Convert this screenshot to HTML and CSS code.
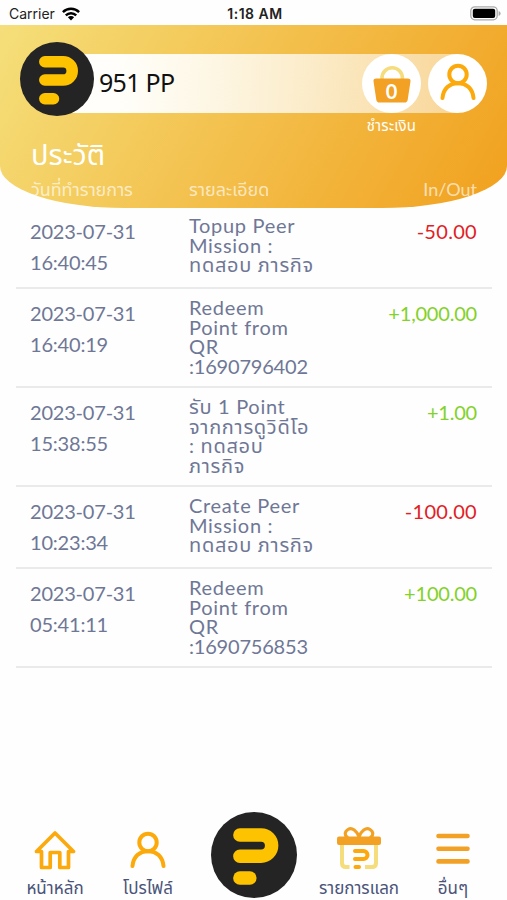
FILE: index.html
```html
<!DOCTYPE html>
<html lang="th">
<head>
  <meta charset="UTF-8">
  <title>ประวัติ</title>
  <link rel="stylesheet" href="styles.css">
</head>
<body>
  <svg class="defs" width="0" height="0">
    <symbol id="logo" viewBox="0 0 73 73">
      <circle cx="36.5" cy="36.5" r="36.5" fill="#242424"/>
      <g fill="none" stroke="#fdc300" stroke-linecap="round">
        <path stroke-width="11.4" d="M24.5 19.5H42.5a9 9 0 0 1 0 18H24.5"/>
        <path stroke-width="11.4" d="M24.5 56H33"/>
      </g>
    </symbol>
    <symbol id="user" viewBox="0 0 38 40">
      <g fill="none" stroke="#fca90c" stroke-width="4.2" stroke-linecap="round">
        <circle cx="19" cy="12" r="9.2"/>
        <path d="M2.600 37C3.600 27 10 21.200 19 21.200S34.400 27 35.400 37"/>
      </g>
    </symbol>
  </svg>

  <div class="status">
    <div class="carrier">
      <span>Carrier</span>
      <svg width="18" height="14" viewBox="0 0 18 14">
        <g fill="none" stroke="#000" stroke-width="2.4">
          <path d="M.9 5.2a11.4 11.4 0 0 1 16.2 0"/>
          <path d="M3.8 8.4a7.3 7.3 0 0 1 10.4 0"/>
        </g>
        <path d="M9 13.4L5.9 10.3a4.4 4.4 0 0 1 6.2 0z"/>
      </svg>
    </div>
    <div class="time">1:18 AM</div>
    <svg class="battery" width="31" height="15" viewBox="0 0 31 15">
      <rect x=".8" y=".8" width="26.4" height="13" rx="4" fill="#fff" stroke="#aaa" stroke-width="1.3"/>
      <rect x="2.8" y="2.7" width="22.4" height="9.2" rx="2"/>
      <path d="M28.6 5v5q2-.8 2-2.5t-2-2.5z" fill="#aaa"/>
    </svg>
  </div>

  <header>
    <div class="balance">
      <svg class="balance-logo"><use href="#logo"/></svg>
      <div class="points">951 PP</div>
      <div class="round cart">
        <svg width="38" height="38" viewBox="0 0 38 38">
          <path d="M9 14v-1a10.2 10.2 0 0 1 20.4 0v1" fill="none" stroke="#f5dc7c" stroke-width="3.6"/>
          <path d="M3.2 13.6h31.6q3 0 2.7 2.7l-2.8 18.5q-.4 2.8-3.2 2.8h-25q-2.8 0-3.2-2.8L.5 16.3q-.3-2.700 2.700-2.700z" fill="#f2a124"/>
        </svg>
        <b>0</b>
        <span class="cart-label">ชำระเงิน</span>
      </div>
      <div class="round">
        <svg class="user" width="36" height="38"><use href="#user"/></svg>
      </div>
    </div>
    <h1>ประวัติ</h1>
    <div class="columns">
      <div class="col-date">วันที่ทำรายการ</div>
      <div class="col-detail">รายละเอียด</div>
      <div class="col-amount">In/Out</div>
    </div>
  </header>

  <main>
    <div class="row">
      <div class="date">2023-07-31<br>16:40:45</div>
      <div class="detail">Topup Peer<br>Mission :<br>ทดสอบ ภารกิจ</div>
      <div class="amount out">-50.00</div>
    </div>
    <div class="row">
      <div class="date">2023-07-31<br>16:40:19</div>
      <div class="detail">Redeem<br>Point from<br>QR<br><span class="code">:1690796402</span></div>
      <div class="amount in">+1,000.00</div>
    </div>
    <div class="row">
      <div class="date">2023-07-31<br>15:38:55</div>
      <div class="detail">รับ 1 Point<br>จากการดูวิดีโอ<br>: ทดสอบ<br>ภารกิจ</div>
      <div class="amount in">+1.00</div>
    </div>
    <div class="row">
      <div class="date">2023-07-31<br>10:23:34</div>
      <div class="detail">Create Peer<br>Mission :<br>ทดสอบ ภารกิจ</div>
      <div class="amount out">-100.00</div>
    </div>
    <div class="row">
      <div class="date">2023-07-31<br>05:41:11</div>
      <div class="detail">Redeem<br>Point from<br>QR<br><span class="code">:1690756853</span></div>
      <div class="amount in">+100.00</div>
    </div>
  </main>

  <nav>
    <div class="tab">
      <svg width="42" height="40" viewBox="0 0 42 40">
        <path d="M2.5 21.5L21 3l18.500 18.500H34.500V37.500H25.800V22.500H16.200V37.500H7.500V21.500z" fill="none" stroke="#fca90c" stroke-width="3.7" stroke-linejoin="round"/>
      </svg>
      <span>หน้าหลัก</span>
    </div>
    <div class="tab">
      <svg width="36" height="40"><use href="#user"/></svg>
      <span>โปรไฟล์</span>
    </div>
    <div class="home"><svg><use href="#logo"/></svg></div>
    <div class="tab">
      <svg width="44" height="43" viewBox="0 0 44 43">
        <path d="M5 17V36q0 4 4 4H12.500M39 17V36q0 4-4 4H28" fill="none" stroke="#f5dc7c" stroke-width="4"/>
        <g fill="none" stroke="#f2a124" stroke-linecap="round">
          <path stroke-width="3.2" d="M22 10C20 4 15 0 11 2.500S8 9 10 10M22 10C24 4 29 0 33 2.500S36 9 34 10"/>
          <path stroke-width="4" stroke="#fda80c" d="M18 24H26.500a4 4 0 0 1 0 8H18M18.500 40H22"/>
        </g>
        <rect y="9.5" width="44" height="8.5" rx="2" fill="#f2a124"/>
      </svg>
      <span>รายการแลก</span>
    </div>
    <div class="tab">
      <svg width="34" height="40" viewBox="0 0 34 40">
        <path d="M2.500 6H31.500M2.500 18.700H31.500M2.500 31.400H31.500" stroke="#f2a124" stroke-width="4.6" stroke-linecap="round"/>
      </svg>
      <span>อื่นๆ</span>
    </div>
  </nav>
</body>
</html>
```

FILE: styles.css
```css
* {
  box-sizing: border-box;
}
body {
  margin: 0;
  height: 900px;
  display: flex;
  flex-direction: column;
  overflow: hidden;
  background: #fefefe;
  font-family: Lato, "Noto Sans Thai", "Noto Sans", sans-serif;
  color: #6f7796;
}
.defs {
  position: absolute;
}
.status {
  height: 25px;
  display: grid;
  grid-template-columns: 1fr auto 1fr;
  align-items: center;
  padding: 2px 6px 0 9px;
  font: 14px Inter, sans-serif;
  color: #222;
}
.carrier {
  display: flex;
  align-items: center;
  gap: 7px;
}
.time {
  font-weight: 600;
  letter-spacing: 0.5px;
}
.battery {
  justify-self: end;
}
header {
  height: 183px;
  padding: 29px 20px 0;
  border-radius: 0 0 125px 125px / 0 0 42px 42px;
  background: linear-gradient(120deg, #f5df7a 0%, #f3bf4b 50%, #f1a01d 100%);
  color: #fff;
}
.balance {
  height: 59px;
  display: flex;
  align-items: center;
  gap: 7px;
  border-radius: 30px;
  background: linear-gradient(90deg, #fffefa 15%, rgba(255, 255, 255, 0.5) 100%) 37px 0 / 401px 100% no-repeat;
}
.balance-logo {
  width: 74px;
  height: 74px;
  margin-top: -9px;
}
.points {
  flex: 1;
  margin: -3px 0 0 -2px;
  font-family: "Noto Sans", sans-serif;
  font-size: 25px;
  letter-spacing: -0.7px;
  color: #111;
}
.round {
  width: 59px;
  height: 59px;
  display: flex;
  align-items: center;
  justify-content: center;
  border-radius: 50%;
  background: #fff;
}
.user {
  margin-bottom: 3px;
}
.cart {
  position: relative;
}
.cart b {
  position: absolute;
  top: 26px;
  font-size: 20px;
  line-height: 22px;
}
.cart-label {
  position: absolute;
  top: 62px;
  font-size: 15px;
  line-height: 18px;
  letter-spacing: 0.3px;
  white-space: nowrap;
}
h1 {
  margin: 24px 0 0 11px;
  font-size: 29px;
  line-height: 34px;
  font-weight: 400;
}
.columns {
  display: flex;
  padding: 6px 10px 0 11px;
  font-size: 18px;
  line-height: 24px;
  color: rgba(255, 255, 255, 0.65);
}
.col-date {
  width: 158px;
  white-space: nowrap;
  letter-spacing: -0.1px;
}
.col-detail {
  flex: 1;
}
main {
  margin: -1px 15px 0 16px;
}
.row {
  display: flex;
  padding: 9px 15px 10px 14px;
  border-bottom: 2px solid #e9eaec;
  font-size: 20px;
}
.date {
  width: 159px;
  line-height: 30.6px;
  letter-spacing: -0.2px;
}
.detail {
  width: 140px;
  line-height: 19.5px;
  letter-spacing: 0.7px;
  white-space: nowrap;
}
.code {
  letter-spacing: -0.2px;
}
.amount {
  flex: 1;
  text-align: right;
  line-height: 31px;
}
.in {
  color: #83d12a;
  letter-spacing: -0.2px;
}
.out {
  color: #e3201f;
  letter-spacing: 0.3px;
}
nav {
  height: 92px;
  margin-top: auto;
  display: grid;
  grid-template-columns: 110px 76px 136px 74px 114px;
  font-size: 17px;
  color: #4a5379;
}
.tab {
  display: flex;
  flex-direction: column;
  align-items: center;
  justify-content: flex-end;
  gap: 7px;
  padding-bottom: 3px;
  line-height: 22px;
  white-space: nowrap;
}
.home {
  text-align: center;
}
.home svg {
  width: 86px;
  height: 86px;
  margin-top: 4px;
}
```
